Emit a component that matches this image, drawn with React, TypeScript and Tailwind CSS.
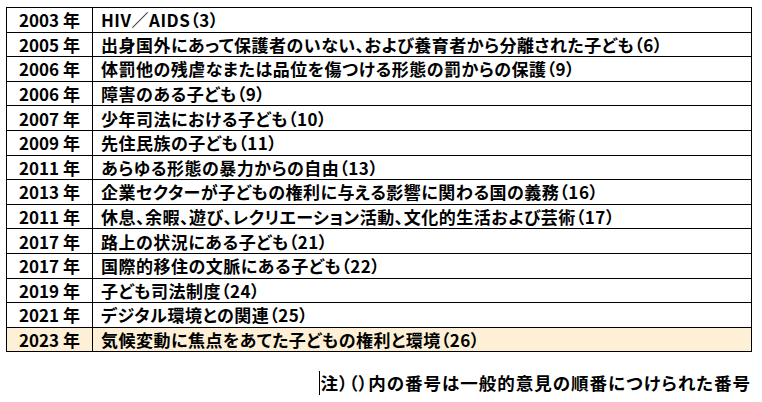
const rows: [string, string][] = [
  ["2003 年", "HIV／AIDS（3）"],
  ["2005 年", "出身国外にあって保護者のいない、および養育者から分離された子ども（6）"],
  ["2006 年", "体罰他の残虐なまたは品位を傷つける形態の罰からの保護（9）"],
  ["2006 年", "障害のある子ども（9）"],
  ["2007 年", "少年司法における子ども（10）"],
  ["2009 年", "先住民族の子ども（11）"],
  ["2011 年", "あらゆる形態の暴力からの自由（13）"],
  ["2013 年", "企業セクターが子どもの権利に与える影響に関わる国の義務（16）"],
  ["2011 年", "休息、余暇、遊び、レクリエーション活動、文化的生活および芸術（17）"],
  ["2017 年", "路上の状況にある子ども（21）"],
  ["2017 年", "国際的移住の文脈にある子ども（22）"],
  ["2019 年", "子ども司法制度（24）"],
  ["2021 年", "デジタル環境との関連（25）"],
  ["2023 年", "気候変動に焦点をあてた子どもの権利と環境（26）"],
];

export default function App() {
  return (
    <div
      className="h-[402px] w-[762px] bg-white text-black [font-feature-settings:'palt']"
      style={{ fontFamily: '"Noto Sans CJK JP", "Liberation Sans", sans-serif' }}
    >
      <div className="pl-[6px] pt-[7px]">
        <table className="w-[746px] border-collapse border border-black text-[17px] font-bold leading-none">
          <tbody>
            {rows.map(([year, text], i) => (
              <tr
                key={i}
                className={i === rows.length - 1 ? "h-[24.6px] bg-[#fdf0d6]" : "h-[24.6px]"}
              >
                <td className="w-[86px] border border-black text-center">{year}</td>
                <td className="border border-black pl-2 tracking-[0.5px]">{text}</td>
              </tr>
            ))}
          </tbody>
        </table>
      </div>
      <div className="mt-[19px] flex justify-end pr-[11px]">
        <p className="border-l border-black pl-px text-[17.5px] font-bold leading-[24px] tracking-[1px]">
          注）（）内の番号は一般的意見の順番につけられた番号
        </p>
      </div>
    </div>
  );
}
